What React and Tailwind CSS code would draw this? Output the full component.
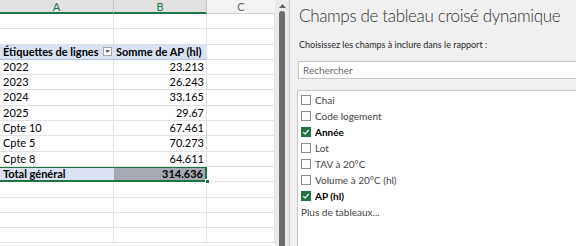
import React from 'react';

const rows = [
  { label: '2022', value: '23.213' },
  { label: '2023', value: '26.243' },
  { label: '2024', value: '33.165' },
  { label: '2025', value: '29.67' },
  { label: 'Cpte 10', value: '67.461' },
  { label: 'Cpte 5', value: '70.273' },
  { label: 'Cpte 8', value: '64.611' },
];

const fields = [
  { name: 'Chai', checked: false },
  { name: 'Code logement', checked: false },
  { name: 'Année', checked: true },
  { name: 'Lot', checked: false },
  { name: 'TAV à 20°C', checked: false },
  { name: 'Volume à 20°C (hl)', checked: false },
  { name: 'AP (hl)', checked: true },
];

const cellFont = { fontFamily: 'Lato, "Liberation Sans", sans-serif' };
const paneFont = { fontFamily: 'Lato, "Open Sans", sans-serif' };

const Row = ({ a, b, c }) => (
  <div className="flex h-[15.3px]">
    <div className="w-[114px] shrink-0 border-r border-b border-[#e1e1e1] flex items-center">{a}</div>
    <div className="w-[93px] shrink-0 border-r border-b border-[#e1e1e1] flex items-center">{b}</div>
    <div className="w-[68px] shrink-0 border-r border-b border-[#e1e1e1]">{c}</div>
  </div>
);

const Check = ({ checked }) =>
  checked ? (
    <span className="w-[10px] h-[10px] shrink-0 bg-[#217346] flex items-center justify-center">
      <svg width="8" height="8" viewBox="0 0 8 8">
        <path d="M1.2 4.2 L3.2 6 L6.8 2" fill="none" stroke="white" strokeWidth="1.2" />
      </svg>
    </span>
  ) : (
    <span className="w-[10px] h-[10px] shrink-0 bg-white border border-[#8c8c8c]" />
  );

const App = () => {
  return (
    <div className="flex w-[576px] h-[246px] overflow-hidden bg-white">
      {/* Feuille */}
      <div className="w-[275px] shrink-0 text-[11px] text-black" style={cellFont}>
        <div className="flex h-[14px] text-[11px] leading-none">
          <div className="w-[114px] bg-[#e1e1e1] border-r border-[#c6c6c6] border-b-2 border-b-[#217346] text-[#217346] flex items-center justify-center">A</div>
          <div className="w-[93px] bg-[#e1e1e1] border-r border-[#c6c6c6] border-b-2 border-b-[#217346] text-[#217346] flex items-center justify-center">B</div>
          <div className="w-[68px] bg-[#f3f3f3] border-b border-[#d4d4d4] text-[#666] flex items-center justify-center">C</div>
        </div>
        <Row />
        <Row />
        <div className="flex h-[15.3px] font-bold">
          <div className="w-[114px] shrink-0 bg-[#d9e1f2] border-b border-[#b4c6e7] flex items-center justify-between pl-[3px] pr-[2px]">
            <span>Étiquettes de lignes</span>
            <span className="w-[9px] h-[9px] bg-white border border-[#a6a6a6] flex items-center justify-center">
              <svg width="5" height="3" viewBox="0 0 5 3"><path d="M0 0 L5 0 L2.5 3 Z" fill="#666" /></svg>
            </span>
          </div>
          <div className="w-[93px] shrink-0 bg-[#d9e1f2] border-b border-[#b4c6e7] flex items-center pl-[2px]">Somme de AP (hl)</div>
          <div className="w-[68px] shrink-0 border-r border-b border-[#e1e1e1]" />
        </div>
        {rows.map((r) => (
          <Row
            key={r.label}
            a={<span className="pl-[3px]">{r.label}</span>}
            b={<span className="ml-auto pr-[2px]">{r.value}</span>}
          />
        ))}
        <div className="flex h-[15.3px] font-bold">
          <div className="w-[207px] shrink-0 flex border-t border-b-2 border-[#217346] relative">
            <div className="w-[114px] bg-[#d9e1f2] flex items-center pl-[3px]">Total général</div>
            <div className="flex-1 bg-[#a6aab3] border-r-2 border-[#217346] flex items-center justify-end pr-[2px]">314.636</div>
            <span className="absolute right-[-3px] bottom-[-4px] w-[5px] h-[5px] bg-[#217346] border border-white" />
          </div>
          <div className="w-[68px] shrink-0 border-r border-b border-[#e1e1e1]" />
        </div>
        <Row />
        <Row />
        <Row />
        <Row />
      </div>

      {/* Barre de défilement */}
      <div className="w-[15px] shrink-0 bg-[#ebebeb] border-r border-[#c8c8c8] flex flex-col items-center pt-[4px]">
        <svg width="7" height="4" viewBox="0 0 7 4"><path d="M0 4 L3.5 0 L7 4 Z" fill="#606060" /></svg>
        <div className="w-[6px] flex-1 mt-[3px] bg-[#6e6e6e] rounded-t-[3px]" />
      </div>

      {/* Volet */}
      <div className="flex-1 min-w-0 bg-[#f0f0f0] pl-[8px] pt-[4px]" style={paneFont}>
        <div className="text-[17px] tracking-[-0.35px] font-light text-[#303030] leading-[24px] ml-[1px] whitespace-nowrap">Champs de tableau croisé dynamique</div>
        <div className="text-[9px] text-[#262626] mt-[11px] ml-[1px] leading-[12px] whitespace-nowrap">Choisissez les champs à inclure dans le rapport :</div>
        <div className="mt-[10px] h-[18px] bg-white border border-[#c6c6c6] border-r-0 flex items-center pl-[4px] text-[10px] text-[#6a6a6a]">
          Rechercher
        </div>
        <div className="mt-[11px] -ml-px h-[200px] bg-white border border-[#c6c6c6] border-r-0 pt-px pl-[3px] text-[10px] text-[#444]">
          {fields.map((f) => (
            <div key={f.name} className="h-[16px] flex items-center gap-[4px]">
              <Check checked={f.checked} />
              <span className={f.checked ? 'font-bold text-black' : ''}>{f.name}</span>
            </div>
          ))}
          <div className="h-[16px] flex items-center">Plus de tableaux...</div>
        </div>
      </div>
    </div>
  );
};

export default App;
